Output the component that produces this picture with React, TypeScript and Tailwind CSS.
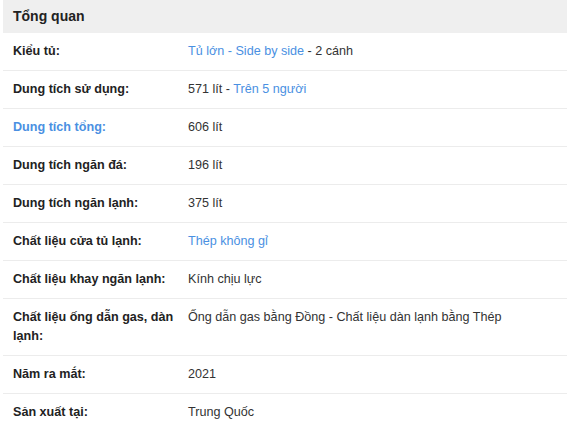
import React from "react";

type Part = { text: string; link?: boolean };
type Spec = { label: string; labelLink?: boolean; value: Part[] };

const specs: Spec[] = [
  {
    label: "Kiểu tủ:",
    value: [{ text: "Tủ lớn - Side by side", link: true }, { text: " - 2 cánh" }],
  },
  {
    label: "Dung tích sử dụng:",
    value: [{ text: "571 lít - " }, { text: "Trên 5 người", link: true }],
  },
  { label: "Dung tích tổng:", labelLink: true, value: [{ text: "606 lít" }] },
  { label: "Dung tích ngăn đá:", value: [{ text: "196 lít" }] },
  { label: "Dung tích ngăn lạnh:", value: [{ text: "375 lít" }] },
  { label: "Chất liệu cửa tủ lạnh:", value: [{ text: "Thép không gỉ", link: true }] },
  { label: "Chất liệu khay ngăn lạnh:", value: [{ text: "Kính chịu lực" }] },
  {
    label: "Chất liệu ống dẫn gas, dàn lạnh:",
    value: [{ text: "Ống dẫn gas bằng Đồng - Chất liệu dàn lạnh bằng Thép" }],
  },
  { label: "Năm ra mắt:", value: [{ text: "2021" }] },
  { label: "Sản xuất tại:", value: [{ text: "Trung Quốc" }] },
];

export default function App() {
  return (
    <div className="w-[567px] h-[430px] overflow-hidden bg-white pl-[3px] font-['Liberation_Sans',Arial,sans-serif] text-[12.6px] text-[#333]">
      <div className="h-[33px] bg-[#efefef] pl-[10px] flex items-center">
        <h3 className="text-[14px] font-bold text-[#222]">Tổng quan</h3>
      </div>
      <ul>
        {specs.map((s) => (
          <li key={s.label} className="flex border-b border-[#ececec] py-[9px] leading-[19px]">
            <span
              className={`w-[175px] shrink-0 pl-[10px] font-bold ${
                s.labelLink ? "text-[#4a90e2]" : "text-[#222]"
              }`}
            >
              {s.label}
            </span>
            <span className="flex-1 pl-[10px]">
              {s.value.map((p, i) =>
                p.link ? (
                  <a key={i} href="#" className="text-[#4a90e2]">
                    {p.text}
                  </a>
                ) : (
                  <span key={i}>{p.text}</span>
                )
              )}
            </span>
          </li>
        ))}
      </ul>
    </div>
  );
}
